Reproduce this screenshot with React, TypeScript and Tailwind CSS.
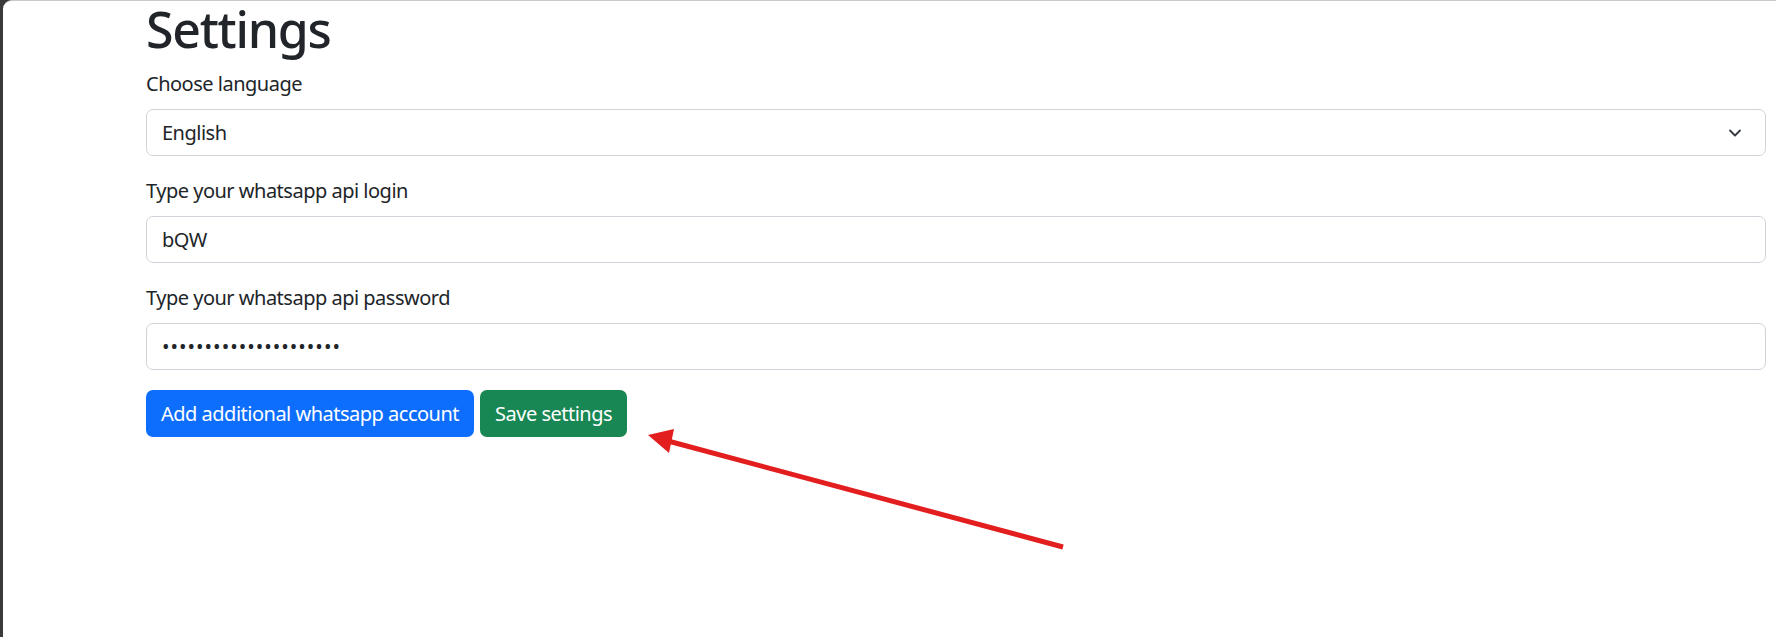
import { ChevronDown } from "lucide-react";

const font = { fontFamily: "'Noto Sans', 'Open Sans', sans-serif" };

function Field({ label, children }: { label: string; children: React.ReactNode }) {
  return (
    <div className="mb-5">
      <div className="mb-[10px] text-[20px] leading-[30px] tracking-tight text-[#212529]">{label}</div>
      {children}
    </div>
  );
}

export default function App() {
  return (
    <div className="relative h-[637px] w-[1776px] overflow-hidden bg-[#3a3a3a]" style={font}>
      <div className="h-full rounded-tl-[9px] border-t border-[#c9c9c9] bg-white ml-[3px]">
        <div className="pl-[143px] pr-[10px]">
          <h1 className="mb-[12px] text-[50px] font-medium leading-[56px] tracking-tight text-[#212529]">Settings</h1>

          <Field label="Choose language">
            <div className="flex h-[47px] items-center justify-between rounded-[7px] border border-[#ced4da] pl-[15px] pr-[20px] text-[20px] tracking-tight text-[#212529]">
              <span>English</span>
              <ChevronDown className="h-5 w-5 text-[#343a40]" strokeWidth={2.2} />
            </div>
          </Field>

          <Field label="Type your whatsapp api login">
            <div className="flex h-[47px] items-center rounded-[7px] border border-[#ced4da] px-[15px] text-[20px] tracking-tight text-[#212529]">
              bQW
            </div>
          </Field>

          <Field label="Type your whatsapp api password">
            <div className="flex h-[47px] items-center rounded-[7px] border border-[#ced4da] px-[15px] text-[20px] tracking-[1px] text-[#212529]">
              •••••••••••••••••••••
            </div>
          </Field>

          <div className="flex gap-[6px]">
            <button className="h-[47px] rounded-[7px] bg-[#0d6efd] px-[15px] text-[20px] tracking-tight text-white">
              Add additional whatsapp account
            </button>
            <button className="h-[47px] rounded-[7px] bg-[#198754] px-[15px] text-[20px] tracking-tight text-white">
              Save settings
            </button>
          </div>
        </div>
      </div>

      <svg className="pointer-events-none absolute left-0 top-0" width="1776" height="637">
        <line x1="1063" y1="547" x2="668" y2="441" stroke="#e31e1e" strokeWidth="5" />
        <polygon points="648,435 674,429 669,453" fill="#e31e1e" />
      </svg>
    </div>
  );
}
